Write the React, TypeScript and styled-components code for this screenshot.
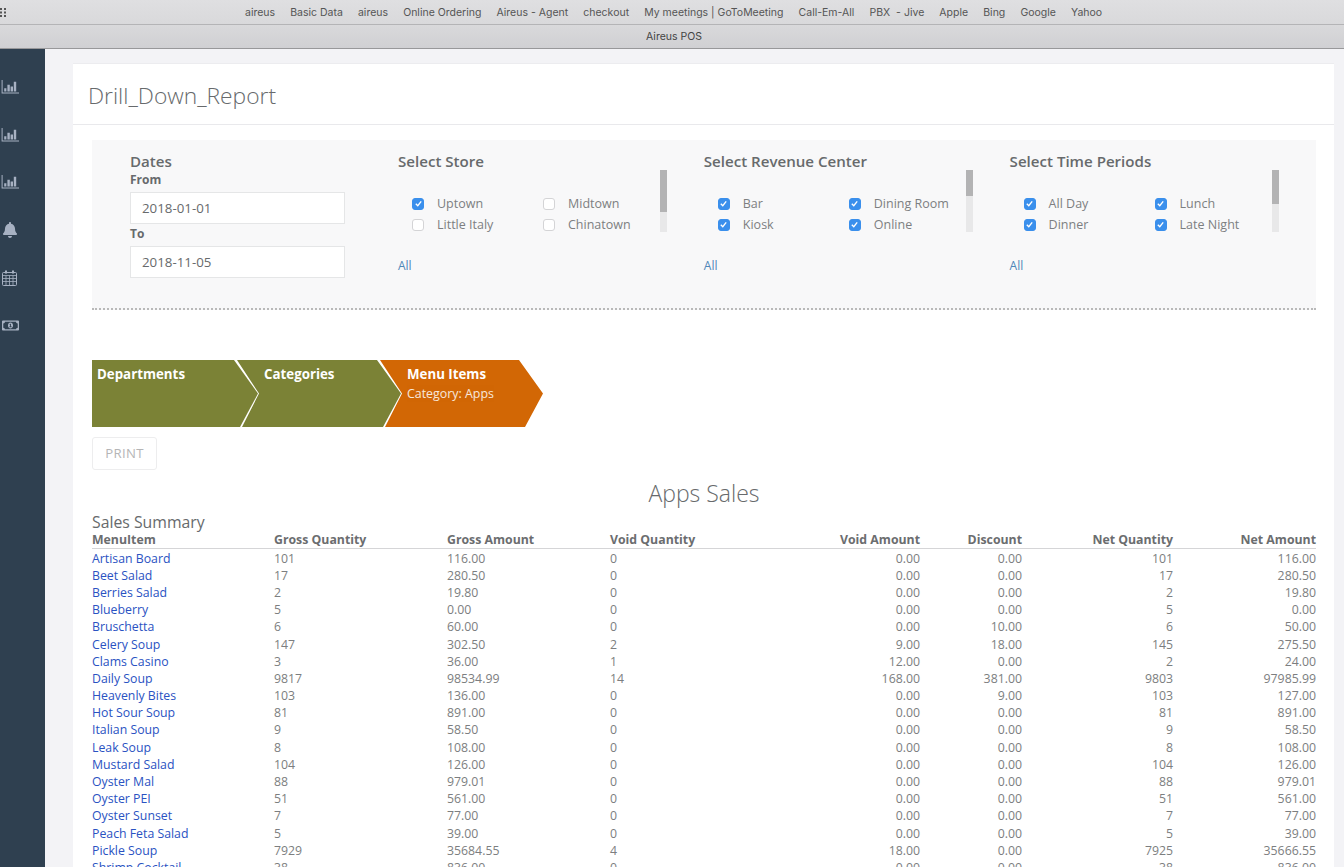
import styled, { createGlobalStyle } from "styled-components";
import { FaBell, FaRegMoneyBillAlt } from "react-icons/fa";

const bookmarks = [
  "aireus",
  "Basic Data",
  "aireus",
  "Online Ordering",
  "Aireus - Agent",
  "checkout",
  "My meetings | GoToMeeting",
  "Call-Em-All",
  "PBX  - Jive",
  "Apple",
  "Bing",
  "Google",
  "Yahoo",
];

const filters = [
  {
    title: "Select Store",
    thumb: 42,
    options: [
      ["Uptown", true],
      ["Midtown", false],
      ["Little Italy", false],
      ["Chinatown", false],
    ],
  },
  {
    title: "Select Revenue Center",
    thumb: 26,
    options: [
      ["Bar", true],
      ["Dining Room", true],
      ["Kiosk", true],
      ["Online", true],
    ],
  },
  {
    title: "Select Time Periods",
    thumb: 34,
    options: [
      ["All Day", true],
      ["Lunch", true],
      ["Dinner", true],
      ["Late Night", true],
    ],
  },
] as const;

const colWidths = [182, 173, 163, 120, 190, 102, 151, 143];

const rows = [
  ["Artisan Board", "101", "116.00", "0", "0.00", "0.00", "101", "116.00"],
  ["Beet Salad", "17", "280.50", "0", "0.00", "0.00", "17", "280.50"],
  ["Berries Salad", "2", "19.80", "0", "0.00", "0.00", "2", "19.80"],
  ["Blueberry", "5", "0.00", "0", "0.00", "0.00", "5", "0.00"],
  ["Bruschetta", "6", "60.00", "0", "0.00", "10.00", "6", "50.00"],
  ["Celery Soup", "147", "302.50", "2", "9.00", "18.00", "145", "275.50"],
  ["Clams Casino", "3", "36.00", "1", "12.00", "0.00", "2", "24.00"],
  ["Daily Soup", "9817", "98534.99", "14", "168.00", "381.00", "9803", "97985.99"],
  ["Heavenly Bites", "103", "136.00", "0", "0.00", "9.00", "103", "127.00"],
  ["Hot Sour Soup", "81", "891.00", "0", "0.00", "0.00", "81", "891.00"],
  ["Italian Soup", "9", "58.50", "0", "0.00", "0.00", "9", "58.50"],
  ["Leak Soup", "8", "108.00", "0", "0.00", "0.00", "8", "108.00"],
  ["Mustard Salad", "104", "126.00", "0", "0.00", "0.00", "104", "126.00"],
  ["Oyster Mal", "88", "979.01", "0", "0.00", "0.00", "88", "979.01"],
  ["Oyster PEI", "51", "561.00", "0", "0.00", "0.00", "51", "561.00"],
  ["Oyster Sunset", "7", "77.00", "0", "0.00", "0.00", "7", "77.00"],
  ["Peach Feta Salad", "5", "39.00", "0", "0.00", "0.00", "5", "39.00"],
  ["Pickle Soup", "7929", "35684.55", "4", "18.00", "0.00", "7925", "35666.55"],
  ["Shrimp Cocktail", "38", "836.00", "0", "0.00", "0.00", "38", "836.00"],
];

function ChartIcon() {
  return (
    <svg width="18" height="14" viewBox="0 0 18 14" fill="currentColor">
      <path d="M0.6 0h1v12.4H18v1H0.6z" />
      <path d="M3.2 8.2h2.2v3.2H3.2zM6.4 4.8h2.4v6.6H6.4zM9.6 6.4h2.4v5H9.6zM12.8 1.8h2.4v9.6h-2.4z" />
    </svg>
  );
}

function CalendarIcon() {
  return (
    <svg width="15" height="16" viewBox="0 0 15 16" fill="none" stroke="currentColor">
      <rect x="0.5" y="2.5" width="14" height="13" rx="1" />
      <path d="M0.5 5.5h14M0.5 8.5h14M0.5 11.5h14M4 5.5v10M7.5 5.5v10M11 5.5v10" strokeWidth="0.8" />
      <path d="M4 0.5v3M11 0.5v3" strokeWidth="2" />
    </svg>
  );
}

function Check({ on }: { on: boolean }) {
  return (
    <Box $on={on}>
      {on && (
        <svg width="9" height="9" viewBox="0 0 10 10">
          <path d="M2 5.3 L4.2 7.5 L8 2.6" fill="none" stroke="#fff" strokeWidth="1.5" />
        </svg>
      )}
    </Box>
  );
}

export default function App() {
  return (
    <>
      <GlobalStyle />
      <Window>
        <BookmarkBar>
          <Grip>
            <svg width="7" height="9" viewBox="0 0 7 9">
              <path d="M0 0h2v2H0zM4 0h2v2H4zM0 3.5h2v2H0zM4 3.5h2v2H4zM0 7h2v2H0zM4 7h2v2H4z" fill="#555" />
            </svg>
          </Grip>
          {bookmarks.map((b, i) => (
            <Bookmark key={i}>{b}</Bookmark>
          ))}
        </BookmarkBar>
        <TabBar>Aireus POS</TabBar>
        <Body>
          <Sidebar>
            <SideIcon><ChartIcon /></SideIcon>
            <SideIcon><ChartIcon /></SideIcon>
            <SideIcon><ChartIcon /></SideIcon>
            <SideIcon $pad={2}><FaBell size={16} /></SideIcon>
            <SideIcon $pad={2}><CalendarIcon /></SideIcon>
            <SideIcon $pad={2}><FaRegMoneyBillAlt size={17} /></SideIcon>
          </Sidebar>
          <Main>
            <Card>
              <CardHeader>Drill_Down_Report</CardHeader>
              <CardBody>
                <FilterPanel>
                  <DatesColumn>
                    <FilterTitle>Dates</FilterTitle>
                    <FieldLabel>From</FieldLabel>
                    <DateField>2018-01-01</DateField>
                    <FieldLabel>To</FieldLabel>
                    <DateField>2018-11-05</DateField>
                  </DatesColumn>
                  {filters.map((f) => (
                    <FilterColumn key={f.title}>
                      <FilterTitle>{f.title}</FilterTitle>
                      <OptionsWrap>
                        <Options>
                          {f.options.map(([label, on]) => (
                            <Option key={label}>
                              <Check on={on} />
                              {label}
                            </Option>
                          ))}
                        </Options>
                        <Scroll>
                          <ScrollThumb style={{ height: f.thumb }} />
                        </Scroll>
                      </OptionsWrap>
                      <AllLink>All</AllLink>
                    </FilterColumn>
                  ))}
                </FilterPanel>
                <Crumbs>
                  <Crumb $width={166} $first>
                    <strong>Departments</strong>
                  </Crumb>
                  <Crumb $width={164}>
                    <strong>Categories</strong>
                  </Crumb>
                  <Crumb $width={163} $active>
                    <strong>Menu Items</strong>
                    <span>Category: Apps</span>
                  </Crumb>
                </Crumbs>
                <PrintButton>PRINT</PrintButton>
                <ReportTitle>Apps Sales</ReportTitle>
                <SummaryTitle>Sales Summary</SummaryTitle>
                <Table>
                  <colgroup>
                    {colWidths.map((w, i) => (
                      <Col key={i} $width={w} />
                    ))}
                  </colgroup>
                  <thead>
                    <tr>
                      <Th>MenuItem</Th>
                      <Th>Gross Quantity</Th>
                      <Th>Gross Amount</Th>
                      <Th>Void Quantity</Th>
                      <Th $right>Void Amount</Th>
                      <Th $right>Discount</Th>
                      <Th $right>Net Quantity</Th>
                      <Th $right>Net Amount</Th>
                    </tr>
                  </thead>
                  <TableBody>
                    {rows.map((r) => (
                      <tr key={r[0]}>
                        <Td><ItemLink>{r[0]}</ItemLink></Td>
                        <Td>{r[1]}</Td>
                        <Td>{r[2]}</Td>
                        <Td>{r[3]}</Td>
                        <Td $right>{r[4]}</Td>
                        <Td $right>{r[5]}</Td>
                        <Td $right>{r[6]}</Td>
                        <Td $right>{r[7]}</Td>
                      </tr>
                    ))}
                  </TableBody>
                </Table>
              </CardBody>
            </Card>
          </Main>
        </Body>
      </Window>
    </>
  );
}

const GlobalStyle = createGlobalStyle`
  html, body {
    margin: 0;
    height: 100%;
    overflow: hidden;
    background: #f3f3f6;
  }
  body {
    font-family: "Open Sans", "Liberation Sans", sans-serif;
    color: #676a6c;
  }
`;

const Window = styled.div`
  height: 867px;
  display: flex;
  flex-direction: column;
  overflow: hidden;
`;

const BookmarkBar = styled.div`
  position: relative;
  height: 24px;
  flex: none;
  display: flex;
  align-items: center;
  gap: 15.1px;
  padding-left: 245px;
  box-sizing: content-box;
  background: linear-gradient(#dfdfe1, #d9d9db);
  border-bottom: 1px solid #b4b4b6;
  font-family: "Inter", "Liberation Sans", sans-serif;
  font-size: 10.5px;
  color: #555;
`;

const Grip = styled.div`
  position: absolute;
  left: 0;
  top: 8px;
  line-height: 0;
`;

const Bookmark = styled.span`
  white-space: pre;
`;

const TabBar = styled.div`
  height: 23px;
  flex: none;
  padding-left: 4px;
  display: flex;
  align-items: center;
  justify-content: center;
  background: linear-gradient(#d9d9db, #d0d0d3);
  border-bottom: 1px solid #98989a;
  font-family: "Inter", "Liberation Sans", sans-serif;
  font-size: 10.5px;
  color: #444;
`;

const Body = styled.div`
  flex: 1;
  display: flex;
  min-height: 0;
`;

const Sidebar = styled.nav`
  width: 45px;
  flex: none;
  background: #2f4050;
  display: flex;
  flex-direction: column;
  padding-top: 14px;
  box-sizing: border-box;
`;

const SideIcon = styled.div<{ $pad?: number }>`
  height: 47.8px;
  flex: none;
  display: flex;
  align-items: center;
  padding-left: ${(p) => p.$pad ?? 1}px;
  color: #a7b1c2;
`;

const Main = styled.main`
  flex: 1;
  min-width: 0;
  padding: 14px 10px 0 28px;
  background: #f3f3f6;
`;

const Card = styled.section`
  background: #fff;
  border-top: 1px solid #ececef;
`;

const CardHeader = styled.h1`
  margin: 0;
  height: 61px;
  box-sizing: border-box;
  padding: 15px 0 0 15px;
  border-bottom: 1px solid #e9e9ec;
  font-size: 22.8px;
  line-height: 34px;
  font-weight: 300;
  color: #676a6c;
`;

const CardBody = styled.div`
  padding: 15px 18px 0 19px;
`;

const FilterPanel = styled.div`
  height: 170px;
  box-sizing: border-box;
  padding: 13px 0 0 38px;
  display: flex;
  background: #f8f8f9;
  border-bottom: 2px dotted #b9b9b9;
`;

const DatesColumn = styled.div`
  width: 268px;
  flex: none;
`;

const FilterTitle = styled.h3`
  margin: 0;
  font-size: 15.1px;
  line-height: 17px;
  font-weight: 600;
  color: #676a6c;
`;

const FieldLabel = styled.div`
  padding-top: 1px;
  font-size: 12px;
  line-height: 18px;
  font-weight: 700;
  color: #676a6c;
`;

const DateField = styled.div`
  width: 215px;
  height: 32px;
  box-sizing: border-box;
  margin-top: 3px;
  padding-left: 11px;
  display: flex;
  align-items: center;
  background: #fff;
  border: 1px solid #e5e6e7;
  font-size: 13.3px;
  color: #676a6c;
`;

const FilterColumn = styled.div`
  width: 305.8px;
  flex: none;
`;

const OptionsWrap = styled.div`
  width: 269px;
  height: 62px;
  display: flex;
  justify-content: space-between;
`;

const Options = styled.div`
  width: 262px;
  padding: 23px 0 0 14px;
  box-sizing: border-box;
  display: grid;
  grid-template-columns: 131px 1fr;
  grid-auto-rows: 21px;
`;

const Option = styled.label`
  display: flex;
  align-items: center;
  gap: 13px;
  font-size: 12.5px;
  color: #7d7f81;
`;

const Box = styled.span<{ $on: boolean }>`
  width: 12px;
  height: 12px;
  box-sizing: border-box;
  flex: none;
  display: flex;
  align-items: center;
  justify-content: center;
  border-radius: 3px;
  background: ${(p) => (p.$on ? "#3a8fec" : "#fff")};
  border: 1px solid ${(p) => (p.$on ? "#3a8fec" : "#d4d4d6")};
`;

const Scroll = styled.div`
  width: 7px;
  height: 62px;
  flex: none;
  background: #e8e8e9;
`;

const ScrollThumb = styled.div`
  width: 100%;
  background: #b3b3b4;
`;

const AllLink = styled.a`
  display: block;
  margin-top: 26px;
  font-size: 12px;
  line-height: 16px;
  color: #4f86b8;
`;

const Crumbs = styled.div`
  margin-top: 50px;
  display: flex;
  height: 67px;
`;

const Crumb = styled.div<{ $width: number; $first?: boolean; $active?: boolean }>`
  width: ${(p) => p.$width}px;
  flex: none;
  box-sizing: border-box;
  margin-left: ${(p) => (p.$first ? 0 : -21)}px;
  padding: 6px 0 0 ${(p) => (p.$first ? 5 : 27)}px;
  display: flex;
  flex-direction: column;
  color: #fff;
  background: ${(p) => (p.$active ? "#d26705" : "#7b8236")};
  clip-path: polygon(
    0 0,
    calc(100% - 24px) 0,
    100% 50%,
    calc(100% - 18px) 100%,
    ${(p) => (p.$first ? "0" : "5px")} 100%,
    ${(p) => (p.$first ? "0" : "22px")} 50%
  );
  strong {
    font-size: 13.3px;
    line-height: 17px;
    font-weight: 700;
  }
  span {
    margin-top: 2px;
    font-size: 12.4px;
    line-height: 17px;
    opacity: 0.85;
  }
`;

const PrintButton = styled.button`
  display: block;
  width: 65px;
  height: 33px;
  margin-top: 10px;
  padding: 0 0 2px;
  background: #fff;
  border: 1px solid #ededee;
  border-radius: 3px;
  font-family: inherit;
  font-size: 13.2px;
  letter-spacing: 0.3px;
  color: #b5b5b6;
`;

const ReportTitle = styled.h2`
  margin: 6px 0 0;
  text-align: center;
  font-size: 23px;
  line-height: 34px;
  font-weight: 300;
  color: #676a6c;
`;

const SummaryTitle = styled.div`
  margin-top: 3px;
  font-size: 15.8px;
  line-height: 18px;
  color: #676a6c;
`;

const Table = styled.table`
  width: 100%;
  table-layout: fixed;
  border-collapse: collapse;
  font-size: 12.3px;
`;

const Col = styled.col<{ $width: number }>`
  width: ${(p) => p.$width}px;
`;

const Th = styled.th<{ $right?: boolean }>`
  padding: 0;
  height: 17px;
  text-align: ${(p) => (p.$right ? "right" : "left")};
  font-weight: 700;
  color: #6b6d6f;
  border-bottom: 1px solid #d5d5d7;
`;

const TableBody = styled.tbody`
  tr:first-child td {
    padding-top: 0.6px;
  }
`;

const Td = styled.td<{ $right?: boolean }>`
  padding: 0;
  height: 17.18px;
  line-height: 17.18px;
  text-align: ${(p) => (p.$right ? "right" : "left")};
  color: #7c7e80;
  white-space: nowrap;
`;

const ItemLink = styled.a`
  color: #2a52c2;
`;
